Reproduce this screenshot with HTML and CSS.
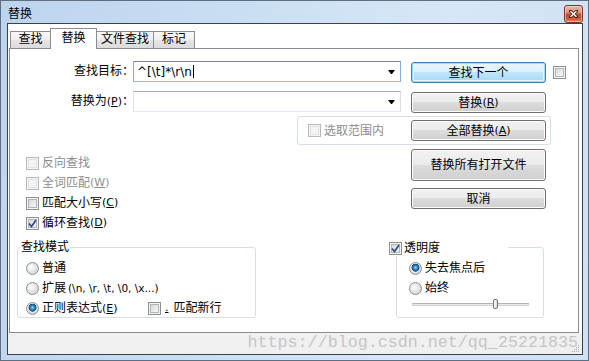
FILE: index.html
```html
<!DOCTYPE html>
<html lang="zh-CN">
<head>
<meta charset="utf-8">
<title>替换</title>
<link rel="stylesheet" href="styles.css">
</head>
<body>
<div class="window">
  <div class="titlebar">
    <span class="title">替换</span>
    <div class="close">
      <svg width="9" height="8" viewBox="0 0 9 8"><path d="M1.5 1.2 L7.5 6.8 M7.5 1.2 L1.5 6.8" stroke="#4a1b12" stroke-width="3" stroke-linecap="square"/><path d="M1.5 1.2 L7.5 6.8 M7.5 1.2 L1.5 6.8" stroke="#fff" stroke-width="1.5"/></svg>
    </div>
  </div>
  <div class="client">
    <div class="tabs">
      <div class="tab w1">查找</div>
      <div class="tab active w2">替换</div>
      <div class="tab w3">文件查找</div>
      <div class="tab w4">标记</div>
    </div>
    <div class="page">
      <div class="row r1">
        <div class="lbl">查找目标<span class="colon">：</span></div>
        <div class="combo focus"><span class="val">^[\t]*\r\n</span><span class="caret"></span><span class="arrow"></span></div>
        <div class="btn default">查找下一个</div>
        <span class="cb side"></span>
      </div>
      <div class="row r2">
        <div class="lbl">替换为<span class="acc">(<u>P</u>)</span><span class="colon">：</span></div>
        <div class="combo"><span class="arrow"></span></div>
        <div class="btn">替换<span class="acc">(<u>R</u>)</span></div>
      </div>
      <div class="scope">
        <div class="opt disabled"><span class="cb"></span>选取范围内</div>
        <div class="btn">全部替换<span class="acc">(<u>A</u>)</span></div>
      </div>
      <div class="middle">
        <div class="opts">
          <div class="opt disabled"><span class="cb"></span>反向查找</div>
          <div class="opt disabled"><span class="cb"></span>全词匹配<span class="acc">(<u>W</u>)</span></div>
          <div class="opt"><span class="cb"></span>匹配大小写<span class="acc">(<u>C</u>)</span></div>
          <div class="opt"><span class="cb checked"><svg width="11" height="11" viewBox="0 0 11 11"><path d="M2 5.5 L4.5 8.5 L9 2" fill="none" stroke="#2e4a8a" stroke-width="1.7"/></svg></span>循环查找<span class="acc">(<u>D</u>)</span></div>
        </div>
        <div class="btncol">
          <div class="btn tall">替换所有打开文件</div>
          <div class="btn">取消</div>
        </div>
      </div>
      <div class="bottom">
        <div class="group mode">
          <span class="legend">查找模式</span>
          <div class="opt"><span class="rb"></span>普通</div>
          <div class="opt"><span class="rb"></span>扩展<span class="ext">(\n, \r, \t, \0, \x...)</span></div>
          <div class="opt"><span class="rb on"></span><span class="re-label">正则表达式<span class="acc">(<u>E</u>)</span></span><span class="cb"></span><span class="acc dot"><u>.</u></span>匹配新行</div>
        </div>
        <div class="group trans">
          <div class="trans-check"><span class="cb checked"><svg width="11" height="11" viewBox="0 0 11 11"><path d="M2 5.5 L4.5 8.5 L9 2" fill="none" stroke="#2e4a8a" stroke-width="1.7"/></svg></span>透明度</div>
          <div class="opt"><span class="rb on"></span>失去焦点后</div>
          <div class="opt"><span class="rb"></span>始终</div>
          <div class="slider"><span class="track"></span><span class="thumb"></span></div>
        </div>
      </div>
    </div>
    <div class="strip"></div>
    <div class="watermark">https://blog.csdn.net/qq_25221835</div>
    <svg class="grip" width="9" height="9" viewBox="0 0 9 9"><g fill="#a9a9a9"><rect x="7" y="1" width="1" height="1"/><rect x="5" y="3" width="1" height="1"/><rect x="7" y="3" width="1" height="1"/><rect x="3" y="5" width="1" height="1"/><rect x="5" y="5" width="1" height="1"/><rect x="7" y="5" width="1" height="1"/><rect x="1" y="7" width="1" height="1"/><rect x="3" y="7" width="1" height="1"/><rect x="5" y="7" width="1" height="1"/><rect x="7" y="7" width="1" height="1"/></g></svg>
  </div>
</div>
</body>
</html>
```
FILE: styles.css
```css
* { box-sizing: border-box; }
html, body { margin: 0; padding: 0; }
body {
  width: 589px;
  height: 361px;
  overflow: hidden;
  font-family: "Liberation Sans", "Noto Sans CJK SC", sans-serif;
  font-size: 12px;
  line-height: 14px;
  color: #000;
}
.window {
  width: 589px;
  height: 361px;
  border: 1px solid #5f6e80;
  padding: 0 5px 5px 6px;
  display: flex;
  flex-direction: column;
  background: linear-gradient(100deg, #bdd4ee 0%, #cbdff3 40%, #d8e7f7 70%, #cfe0f3 100%);
}
.titlebar {
  height: 22px;
  flex: none;
  display: flex;
  align-items: flex-start;
  justify-content: space-between;
}
.title { margin: 6px 0 0 1px; line-height: 14px; }
.close {
  width: 19px;
  height: 18px;
  margin-top: 4px;
  border: 1px solid #7a3526;
  border-radius: 3px;
  background: linear-gradient(#eab5a6 0%, #dc9481 40%, #c54b2b 52%, #cd5834 78%, #e1865d 100%);
  box-shadow: inset 0 0 0 1px rgba(255, 225, 215, 0.55);
  display: flex;
  align-items: center;
  justify-content: center;
}
.close svg { display: block; }
.client {
  flex: 1;
  border: 1px solid #38424f;
  background: #fff;
  display: flex;
  flex-direction: column;
  position: relative;
}
.tabs {
  height: 24px;
  flex: none;
  display: flex;
  align-items: flex-end;
  padding-left: 2px;
}
.tab {
  height: 17px;
  border: 1px solid #898c95;
  border-bottom: none;
  margin-left: -1px;
  text-align: center;
  line-height: 15px;
  background: linear-gradient(#f8f8f8 0%, #f0f0f0 45%, #e3e3e3 55%, #dcdcdc 100%);
}
.tab.w1 { width: 41px; margin-left: 0; }
.tab.w2 { width: 47px; }
.tab.w3 { width: 58px; }
.tab.w4 { width: 42px; }
.tab.active {
  height: 21px;
  margin-bottom: -1px;
  background: #fff;
  position: relative;
  z-index: 1;
  line-height: 18px;
}
.page {
  height: 285px;
  flex: none;
  margin: 0 3px 0 1px;
  border: 1px solid #898c95;
  position: relative;
}
.strip { flex: 1; background: #f0f0f0; }

.row { display: flex; align-items: flex-start; }
.r1 { margin-top: 12px; }
.r2 { margin-top: 8px; }
.lbl {
  width: 117px;
  text-align: right;
  line-height: 21px;
  white-space: nowrap;
}
.colon { margin-right: -7px; }
.acc { font-family: "DejaVu Sans", sans-serif; font-size: 11px; }
.combo {
  width: 268px;
  height: 21px;
  margin-left: 6px;
  border: 1px solid;
  border-color: #abadb3 #dbdfe6 #e3e9ef #e2e3ea;
  background: #fff;
  display: flex;
  align-items: center;
}
.combo.focus { border-color: #4f8fcf #7fb2e5 #8dbbe9 #7fb2e5; }
.val { font-family: "DejaVu Sans", sans-serif; font-size: 12px; margin-left: 3px; }
.caret { width: 1px; height: 13px; background: #000; margin-left: 1px; }
.arrow {
  margin-left: auto;
  margin-right: 5px;
  width: 1px;
  height: 0;
  border-left: 3px solid transparent;
  border-right: 3px solid transparent;
  border-top: 4px solid #000;
  box-sizing: content-box;
}
.btn {
  width: 135px;
  height: 21px;
  margin-left: 10px;
  margin-top: 1px;
  border: 1px solid #707070;
  border-radius: 3px;
  background: linear-gradient(#f2f2f2 0%, #ebebeb 49%, #dddddd 50%, #cfcfcf 100%);
  box-shadow: inset 0 0 0 1px #fbfbfb;
  display: flex;
  align-items: center;
  justify-content: center;
  flex: none;
}
.btn.default {
  border-color: #3c7fb1;
  background: linear-gradient(#eaf6fd 0%, #d9f0fc 49%, #bee6fd 50%, #a7d9f5 100%);
  box-shadow: inset 0 0 0 1px #a6dbf7, inset 0 0 0 2px #e6f5fd;
}
.btn.tall { height: 32px; }

.cb {
  width: 13px;
  height: 13px;
  flex: none;
  border: 1px solid #8e8f8f;
  background: linear-gradient(135deg, #cbcfd4 0%, #eceef0 60%, #fafafa 100%);
  box-shadow: inset 0 0 0 1px #f4f4f4, inset 0 0 0 2px #b1b5ba;
  margin-right: 3px;
  display: flex;
  align-items: center;
  justify-content: center;
}
.cb svg { display: block; }
.cb.side { margin: 5px 0 0 7px; }
.disabled { color: #8d8d8d; }
.disabled .cb {
  border-color: #b8b8b8;
  background: #f4f4f4;
  box-shadow: inset 0 0 0 1px #f4f4f4, inset 0 0 0 2px #e2e2e2;
}
.rb {
  width: 13px;
  height: 13px;
  flex: none;
  border-radius: 50%;
  border: 1px solid #8e8f8f;
  background: radial-gradient(circle at 38% 38%, #ffffff 0%, #e6e6e6 45%, #c8c8c8 100%);
  margin-right: 3px;
}
.rb.on {
  background:
    radial-gradient(circle at 50% 42%, #9be0fb 0px, #3b9ad8 1.5px, #1d5c92 3.2px, #174a77 3.8px, rgba(0,0,0,0) 4.2px),
    radial-gradient(circle at 38% 38%, #ffffff 0%, #e6e6e6 45%, #c8c8c8 100%);
}
.opt { display: flex; align-items: center; height: 20px; white-space: nowrap; }

.scope {
  margin: 3px 0 0 287px;
  width: 254px;
  height: 29px;
  border: 1px solid #d5dfe5;
  border-radius: 3px;
  display: flex;
  align-items: center;
  padding-left: 10px;
}
.scope .btn { margin: 0 4px 0 auto; }

.middle { display: flex; align-items: flex-start; }
.opts { margin: 8px 0 0 16px; width: 385px; flex: none; }
.btncol { margin-top: 4px; display: flex; flex-direction: column; gap: 7px; }
.btncol .btn { margin: 0; }

.bottom { display: flex; align-items: flex-start; }
.group {
  border: 1px solid #d5dfe5;
  border-radius: 3px;
  position: relative;
  height: 71px;
  margin-top: 14px;
}
.mode { width: 239px; margin-left: 7px; padding: 10px 0 0 8px; }
.legend {
  position: absolute;
  top: -9px;
  left: 2px;
  padding: 0 1px;
  background: #fff;
  line-height: 16px;
}
.ext {
  font-family: "DejaVu Sans", sans-serif;
  font-size: 10.5px;
  margin-left: 2px;
}
.re-label { width: 106px; }
.dot { margin: 0 5px 0 1px; }
.trans { width: 148px; margin-left: 140px; padding: 10px 0 0 12px; }
.trans-check {
  position: absolute;
  top: -8px;
  left: -8px;
  width: 119px;
  height: 16px;
  background: #fff;
  display: flex;
  align-items: center;
}
.trans-check .cb { margin-right: 2px; }
.slider {
  position: relative;
  width: 117px;
  height: 10px;
  margin: 1px 0 0 3px;
}
.track {
  position: absolute;
  left: 0;
  right: 0;
  top: 4px;
  height: 3px;
  border: 1px solid #d0d0d0;
  border-top-color: #b5b5b5;
  background: #e9ebeb;
}
.thumb {
  position: absolute;
  left: 81px;
  top: 0;
  width: 5px;
  height: 10px;
  border: 1px solid #737373;
  border-radius: 2px;
  background: linear-gradient(90deg, #ffffff, #dcdcdc);
}
.watermark {
  position: absolute;
  right: 4px;
  bottom: 3px;
  font-family: "Liberation Mono", monospace;
  font-size: 16.7px;
  line-height: 17px;
  color: #c6c6c6;
  white-space: nowrap;
}
.grip { position: absolute; right: 2px; bottom: 1px; }
```
